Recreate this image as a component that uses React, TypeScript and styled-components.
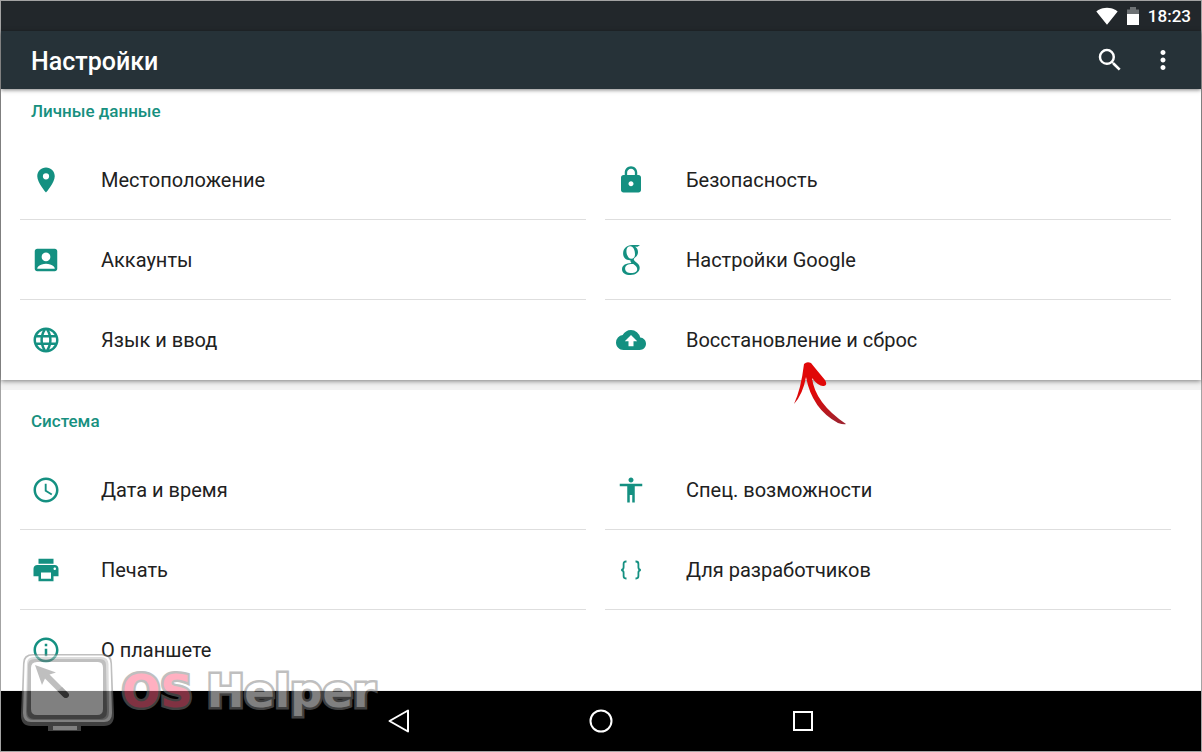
import React from 'react';
import styled, { createGlobalStyle, css } from 'styled-components';
import {
  MdAccessibility,
  MdAccessTime,
  MdAccountBox,
  MdBackup,
  MdInfoOutline,
  MdLanguage,
  MdLocationOn,
  MdLock,
  MdMoreVert,
  MdPrint,
  MdSearch,
  MdSignalWifi4Bar,
} from 'react-icons/md';

const GlobalStyle = createGlobalStyle`
  *, *::before, *::after { box-sizing: border-box; }
  body {
    margin: 0;
    background: #ffffff;
    color: #212121;
    font-family: Roboto, "Noto Sans", sans-serif;
  }
`;

const Screen = styled.div`
  position: relative;
  display: flex;
  flex-direction: column;
  min-height: 100vh;
  border: 1px solid #a3a3a3;
`;

const StatusBar = styled.div`
  display: flex;
  align-items: center;
  justify-content: flex-end;
  height: 30px;
  padding: 0 10px;
  background: #22272b;
  color: #ffffff;
`;

const StatusIcons = styled.div`
  display: flex;
  align-items: center;
  gap: 9px;
  margin-right: 9px;
`;

const Clock = styled.time`
  font-size: 17px;
  font-weight: 500;
  line-height: 20px;
`;

const AppBar = styled.header`
  position: relative;
  display: flex;
  align-items: center;
  justify-content: space-between;
  height: 58px;
  padding: 0 23px 0 30px;
  background: #263238;
  color: #ffffff;
  box-shadow: 0 1px 4px rgba(0, 0, 0, 0.5);
`;

const Title = styled.h1`
  margin: 0;
  padding-top: 4px;
  font-size: 25px;
  font-weight: 500;
  line-height: 30px;
`;

const Actions = styled.div`
  display: flex;
  gap: 23px;
`;

const IconButton = styled.button`
  display: flex;
  padding: 0;
  border: 0;
  background: none;
  color: inherit;
  cursor: pointer;
`;

const Content = styled.main`
  flex: 1;
  background: #f2f2f2;
`;

const Section = styled.section<{ $scrolled?: boolean }>`
  padding: ${({ $scrolled }) => ($scrolled ? '10px' : '19px')} 30px 0 19px;
  background: #ffffff;
  ${({ $scrolled }) =>
    $scrolled &&
    css`
      margin-bottom: 10px;
      box-shadow: 0 1px 5px rgba(0, 0, 0, 0.5);
    `}
`;

const SectionTitle = styled.h2`
  margin: 0 0 17px;
  padding-left: 11px;
  color: #179080;
  font-size: 17px;
  font-weight: 500;
  line-height: 24px;
`;

const Grid = styled.div`
  display: grid;
  grid-template-columns: 1fr 1fr;
  column-gap: 19px;
`;

const Item = styled.a<{ $last?: boolean }>`
  display: flex;
  align-items: center;
  gap: 40px;
  height: 80px;
  padding-left: 11px;
  border-bottom: 1px solid ${({ $last }) => ($last ? 'transparent' : '#dedede')};
  color: #212121;
  font-size: 20px;
  line-height: 24px;
  text-decoration: none;

  svg {
    flex: none;
    color: #149081;
  }
`;

const NavBar = styled.nav`
  display: flex;
  align-items: center;
  justify-content: center;
  gap: 178px;
  height: 60px;
  background: #000000;
  color: #ffffff;
`;

const Pointer = styled.svg`
  position: absolute;
  left: 791px;
  top: 359px;
  pointer-events: none;
`;

const Watermark = styled.div`
  position: absolute;
  left: 19px;
  bottom: 19px;
  display: flex;
  align-items: center;
  gap: 7px;
  opacity: 0.5;
  pointer-events: none;
`;

const Brand = styled.span`
  display: flex;
  gap: 14px;
  color: #ffffff;
  font-family: "DejaVu Sans", sans-serif;
  font-size: 45px;
  font-weight: 700;
  line-height: 50px;
  -webkit-text-stroke: 5px #808080;
  paint-order: stroke fill;
`;

const BrandAccent = styled.span`
  color: #ff6484;
`;

const ICON = 30;

const BatteryIcon = () => (
  <svg width="12" height="18" viewBox="0 0 12 18" aria-hidden="true">
    <path d="M0 7V2.500h3V0h6v2.500h3V7z" fill="#6d7174" />
    <path d="M0 7h12v11H0z" fill="#fff" />
  </svg>
);

const GoogleIcon = () => (
  <svg width={ICON} height={ICON} viewBox="0 0 30 30" aria-hidden="true">
    <path
      fill="currentColor"
      fillRule="evenodd"
      d="M16 0H24l-2.400 1.700h-2.500c2 1.300 2.900 3.200 2.900 5.300 0 2.700-1.300 4.200-2.700 5.300-1.200 1-1.500 1.400-1.500 2.200s.7 1.400 2 2.400c2.300 1.700 3.900 3.100 3.900 5.900 0 4-3.700 7.200-9.300 7.200-5 0-8.400-2.200-8.400-5.800 0-4.200 4.200-6.200 9.400-6.300-.7-.8-1-1.500-1-2.700-4.400.3-7.300-2.500-7.300-6.700C7.100 3.600 10.700 0 16 0zM14.400 1.300c-2.500 0-4 1.900-4 4.600 0 3.800 2 7.900 4.900 7.900 2.400 0 3.700-1.800 3.700-4.600 0-3.700-1.700-7.900-4.600-7.900zM16.400 18.900c-4.200 0-7.300 1.400-7.300 4.500 0 2.800 2.600 4.700 6.300 4.700 3.500 0 5.800-1.600 5.800-4.100 0-2.100-1.400-3.300-3.900-5.100z"
    />
  </svg>
);

const BracesIcon = () => (
  <svg width={ICON} height={ICON} viewBox="0 0 30 30" fill="none" stroke="currentColor" strokeWidth="1.800" aria-hidden="true">
    <path d="M10.500 6.500H10c-1.700 0-2.400.8-2.400 2.400v3.400c0 1.500-.7 2.400-2.300 2.700 1.600.3 2.300 1.200 2.300 2.700v3.400c0 1.600.7 2.400 2.400 2.400h.5" />
    <path d="M19.500 6.500h.5c1.700 0 2.400.8 2.400 2.400v3.400c0 1.500.7 2.400 2.300 2.700-1.600.3-2.300 1.200-2.300 2.700v3.400c0 1.600-.7 2.400-2.400 2.400h-.5" />
  </svg>
);

const MonitorLogo = () => (
  <svg width="95" height="80" viewBox="0 0 95 80" aria-hidden="true">
    <path d="M28 72h33v7H28z" fill="#808080" />
    <path d="M33 73h24v5H33z" fill="#fff" />
    <path d="M13 2h70q9 0 9 9l2 52q0 11-10 11H11Q1 74 1 63L3 11q0-9 10-9z" fill="#808080" />
    <path d="M13 3.500h69q8 0 8.500 8L92 61q0 9-8 9H11q-8 0-8-9l1.500-49q0-8.500 8.500-8.500z" fill="#fff" />
    <path d="M14 5h67q7 0 7.500 7L89 60q0 8-7 8H13q-7 0-7-8l1-48q0-7 7-7z" fill="#bcbcbc" />
    <path d="M15 7h65q6 0 6 6l1 46q0 8-7 8H14q-7 0-7-8l1-46q0-6 7-6z" fill="#808080" />
    <path d="M17 10h61q5 0 5 6v41q0 6-6 6H17q-6 0-6-6V16q0-6 6-6z" fill="#fff" />
    <path d="M15 13l21 7.500-6.500 2L48 41q2 2 0 4t-4.500 0L25 26.500 22 33z" fill="#808080" />
    <path d="M42 35l6 6q2 2 0 4t-4.500 0l-6-6z" fill="#606060" />
  </svg>
);

const personal = [
  { label: 'Местоположение', icon: <MdLocationOn size={ICON} /> },
  { label: 'Безопасность', icon: <MdLock size={ICON} /> },
  { label: 'Аккаунты', icon: <MdAccountBox size={ICON} /> },
  { label: 'Настройки Google', icon: <GoogleIcon /> },
  { label: 'Язык и ввод', icon: <MdLanguage size={ICON} /> },
  { label: 'Восстановление и сброс', icon: <MdBackup size={ICON} /> },
];

const system = [
  { label: 'Дата и время', icon: <MdAccessTime size={ICON} /> },
  { label: 'Спец. возможности', icon: <MdAccessibility size={ICON} /> },
  { label: 'Печать', icon: <MdPrint size={ICON} /> },
  { label: 'Для разработчиков', icon: <BracesIcon /> },
  { label: 'О планшете', icon: <MdInfoOutline size={ICON} /> },
];

type Entry = { label: string; icon: React.ReactNode };

const ItemGrid = ({ items }: { items: Entry[] }) => (
  <Grid>
    {items.map((item, i) => (
      <Item key={item.label} href="#" $last={i >= 4}>
        {item.icon}
        {item.label}
      </Item>
    ))}
  </Grid>
);

export default function App() {
  return (
    <>
      <GlobalStyle />
      <Screen>
        <StatusBar>
          <StatusIcons>
            <MdSignalWifi4Bar size={22} />
            <BatteryIcon />
          </StatusIcons>
          <Clock>18:23</Clock>
        </StatusBar>
        <AppBar>
          <Title>Настройки</Title>
          <Actions>
            <IconButton aria-label="Поиск"><MdSearch size={ICON} /></IconButton>
            <IconButton aria-label="Ещё"><MdMoreVert size={ICON} /></IconButton>
          </Actions>
        </AppBar>
        <Content>
          <Section $scrolled>
            <SectionTitle>Личные данные</SectionTitle>
            <ItemGrid items={personal} />
          </Section>
          <Section>
            <SectionTitle>Система</SectionTitle>
            <ItemGrid items={system} />
          </Section>
        </Content>
        <NavBar>
          <IconButton aria-label="Назад">
            <svg width="24" height="24" viewBox="0 0 24 24" fill="none" stroke="currentColor" strokeWidth="2" strokeLinejoin="round">
              <path d="M21 1.500v21L2.500 12z" />
            </svg>
          </IconButton>
          <IconButton aria-label="Домой">
            <svg width="24" height="24" viewBox="0 0 24 24" fill="none" stroke="currentColor" strokeWidth="2">
              <circle cx="12" cy="12" r="10.500" />
            </svg>
          </IconButton>
          <IconButton aria-label="Недавние">
            <svg width="24" height="24" viewBox="0 0 24 24" fill="none" stroke="currentColor" strokeWidth="2">
              <rect x="3" y="3" width="18" height="18" />
            </svg>
          </IconButton>
        </NavBar>
        <Pointer width="60" height="70" viewBox="0 0 60 70" aria-hidden="true">
          <defs>
            <linearGradient id="pointerInk" x1="0" y1="0" x2="0" y2="1">
              <stop offset="0.5" stopColor="#e00808" />
              <stop offset="1" stopColor="#9c2430" />
            </linearGradient>
          </defs>
          <path
            d="M12 4q3-3 7-1 4 5 14 17 3 5-1 6-5 1-12-8 3 25 34 46-2 1-8-1-26-14-32-46-3 17-12 27 7-15 10-40z"
            fill="url(#pointerInk)"
          />
        </Pointer>
        <Watermark>
          <MonitorLogo />
          <Brand>
            <BrandAccent>OS</BrandAccent>
            <span>Helper</span>
          </Brand>
        </Watermark>
      </Screen>
    </>
  );
}
